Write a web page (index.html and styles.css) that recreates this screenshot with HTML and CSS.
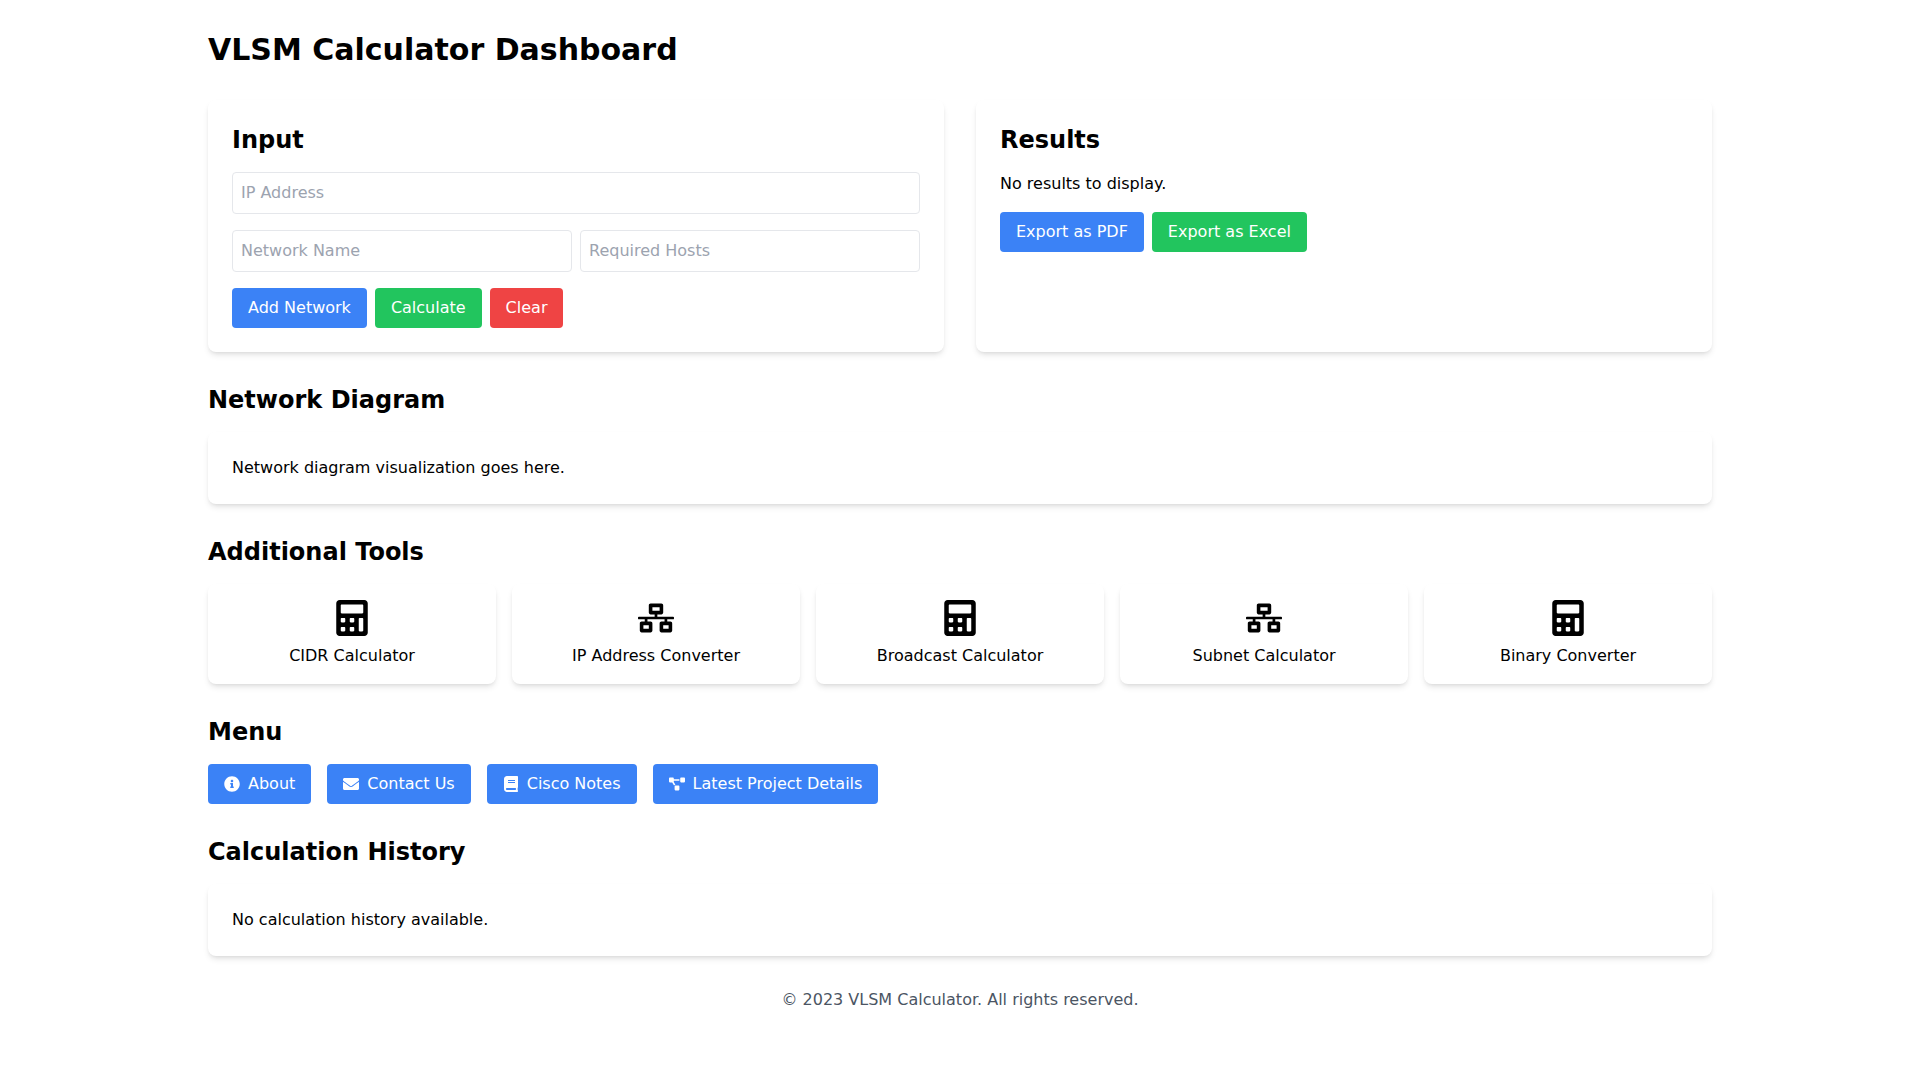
FILE: index.html
```html
<!DOCTYPE html>
<html lang="en">
<head>
  <meta charset="UTF-8">
  <meta name="viewport" content="width=device-width, initial-scale=1.0">
  <title>VLSM Calculator Dashboard</title>
  <link rel="stylesheet" href="styles.css">
</head>
<body>
  <svg class="sprites" xmlns="http://www.w3.org/2000/svg">
    <symbol id="icon-calculator" viewBox="0 0 448 512">
      <path fill="currentColor" d="M400 0H48C22.4 0 0 22.4 0 48v416c0 25.6 22.4 48 48 48h352c25.6 0 48-22.4 48-48V48c0-25.6-22.4-48-48-48zM128 435.2c0 6.4-6.4 12.8-12.8 12.8H76.8c-6.4 0-12.8-6.4-12.8-12.8v-38.4c0-6.4 6.4-12.8 12.8-12.8h38.4c6.4 0 12.8 6.4 12.8 12.8v38.4zm0-128c0 6.4-6.4 12.8-12.8 12.8H76.8c-6.4 0-12.8-6.4-12.8-12.8v-38.4c0-6.4 6.4-12.8 12.8-12.8h38.4c6.4 0 12.8 6.4 12.8 12.8v38.4zm128 128c0 6.4-6.4 12.8-12.8 12.8h-38.4c-6.4 0-12.8-6.4-12.8-12.8v-38.4c0-6.4 6.4-12.8 12.8-12.8h38.4c6.4 0 12.8 6.4 12.8 12.8v38.4zm0-128c0 6.4-6.4 12.8-12.8 12.8h-38.4c-6.4 0-12.8-6.4-12.8-12.8v-38.4c0-6.4 6.4-12.8 12.8-12.8h38.4c6.4 0 12.8 6.4 12.8 12.8v38.4zm128 128c0 6.4-6.4 12.8-12.8 12.8h-38.4c-6.4 0-12.8-6.4-12.8-12.8V268.8c0-6.4 6.4-12.8 12.8-12.8h38.4c6.4 0 12.8 6.4 12.8 12.8v166.4zm0-256c0 6.4-6.4 12.8-12.8 12.8H76.8c-6.4 0-12.8-6.4-12.8-12.8V76.8C64 70.4 70.4 64 76.8 64h294.4c6.4 0 12.8 6.4 12.8 12.8v102.4z"/>
    </symbol>
    <symbol id="icon-network" viewBox="0 0 640 512">
      <path fill="currentColor" d="M640 264v-16c0-8.84-7.16-16-16-16H344v-40h72c17.67 0 32-14.33 32-32V32c0-17.67-14.33-32-32-32H224c-17.67 0-32 14.33-32 32v128c0 17.67 14.33 32 32 32h72v40H16c-8.84 0-16 7.16-16 16v16c0 8.84 7.16 16 16 16h104v40H64c-17.67 0-32 14.33-32 32v128c0 17.67 14.33 32 32 32h160c17.67 0 32-14.33 32-32V352c0-17.67-14.33-32-32-32h-56v-40h304v40h-56c-17.67 0-32 14.33-32 32v128c0 17.67 14.33 32 32 32h160c17.67 0 32-14.33 32-32V352c0-17.67-14.33-32-32-32h-56v-40h104c8.84 0 16-7.16 16-16zM256 128V64h128v64H256zm-64 320H96v-64h96v64zm352 0h-96v-64h96v64z"/>
    </symbol>
  </svg>

  <div class="container">
    <h1>VLSM Calculator Dashboard</h1>

    <div class="top-grid">
      <div class="card">
        <h2>Input</h2>
        <input class="field" type="text" placeholder="IP Address">
        <div class="field-row">
          <input class="field" type="text" placeholder="Network Name">
          <input class="field" type="text" placeholder="Required Hosts">
        </div>
        <div class="btn-row">
          <button class="btn btn-blue">Add Network</button>
          <button class="btn btn-green">Calculate</button>
          <button class="btn btn-red">Clear</button>
        </div>
      </div>

      <div class="card">
        <h2>Results</h2>
        <p class="results-text">No results to display.</p>
        <div class="btn-row">
          <button class="btn btn-blue">Export as PDF</button>
          <button class="btn btn-green">Export as Excel</button>
        </div>
      </div>
    </div>

    <section class="section">
      <h2>Network Diagram</h2>
      <div class="card">
        <p>Network diagram visualization goes here.</p>
      </div>
    </section>

    <section class="section">
      <h2>Additional Tools</h2>
      <div class="tools-grid">
        <div class="tool-card">
          <svg class="tool-icon"><use href="#icon-calculator"></use></svg>
          <p>CIDR Calculator</p>
        </div>
        <div class="tool-card">
          <svg class="tool-icon"><use href="#icon-network"></use></svg>
          <p>IP Address Converter</p>
        </div>
        <div class="tool-card">
          <svg class="tool-icon"><use href="#icon-calculator"></use></svg>
          <p>Broadcast Calculator</p>
        </div>
        <div class="tool-card">
          <svg class="tool-icon"><use href="#icon-network"></use></svg>
          <p>Subnet Calculator</p>
        </div>
        <div class="tool-card">
          <svg class="tool-icon"><use href="#icon-calculator"></use></svg>
          <p>Binary Converter</p>
        </div>
      </div>
    </section>

    <section class="section">
      <h2>Menu</h2>
      <div class="menu-row">
        <a class="btn btn-blue menu-btn" href="#">
          <svg class="menu-icon" viewBox="0 0 512 512"><path fill="currentColor" d="M256 8C119.043 8 8 119.083 8 256c0 136.997 111.043 248 248 248s248-111.003 248-248C504 119.083 392.957 8 256 8zm0 110c23.196 0 42 18.804 42 42s-18.804 42-42 42-42-18.804-42-42 18.804-42 42-42zm56 254c0 6.627-5.373 12-12 12h-88c-6.627 0-12-5.373-12-12v-24c0-6.627 5.373-12 12-12h12v-64h-12c-6.627 0-12-5.373-12-12v-24c0-6.627 5.373-12 12-12h64c6.627 0 12 5.373 12 12v100h12c6.627 0 12 5.373 12 12v24z"/></svg>
          About
        </a>
        <a class="btn btn-blue menu-btn" href="#">
          <svg class="menu-icon" viewBox="0 0 512 512"><path fill="currentColor" d="M502.3 190.8c3.9-3.1 9.7-.2 9.7 4.7V400c0 26.5-21.5 48-48 48H48c-26.5 0-48-21.5-48-48V195.6c0-5 5.7-7.8 9.7-4.7 22.4 17.4 52.1 39.5 154.1 113.6 21.1 15.4 56.7 47.8 92.2 47.6 35.7.3 72-32.8 92.3-47.6 102-74.1 131.6-96.3 154-113.7zM256 320c23.2.4 56.6-29.2 73.4-41.4 132.7-96.3 142.8-104.7 173.4-128.7 5.8-4.5 9.2-11.5 9.2-18.9v-19c0-26.5-21.5-48-48-48H48C21.5 64 0 85.5 0 112v19c0 7.4 3.4 14.3 9.2 18.9 30.6 23.9 40.7 32.4 173.4 128.7 16.8 12.2 50.2 41.8 73.4 41.4z"/></svg>
          Contact Us
        </a>
        <a class="btn btn-blue menu-btn" href="#">
          <svg class="menu-icon" viewBox="0 0 448 512"><path fill="currentColor" d="M448 360V24c0-13.3-10.7-24-24-24H96C43 0 0 43 0 96v320c0 53 43 96 96 96h328c13.3 0 24-10.7 24-24v-16c0-7.5-3.5-14.3-8.9-18.7-4.2-15.4-4.2-59.3 0-74.7 5.4-4.3 8.9-11.1 8.9-18.6zM128 134c0-3.3 2.7-6 6-6h212c3.3 0 6 2.7 6 6v20c0 3.3-2.7 6-6 6H134c-3.3 0-6-2.7-6-6v-20zm0 64c0-3.3 2.7-6 6-6h212c3.3 0 6 2.7 6 6v20c0 3.3-2.7 6-6 6H134c-3.3 0-6-2.7-6-6v-20zm253.4 250H96c-17.7 0-32-14.3-32-32 0-17.6 14.4-32 32-32h285.4c-1.9 17.1-1.9 46.9 0 64z"/></svg>
          Cisco Notes
        </a>
        <a class="btn btn-blue menu-btn" href="#">
          <svg class="menu-icon" viewBox="0 0 640 512"><path fill="currentColor" d="M384 320H256c-17.67 0-32 14.33-32 32v128c0 17.67 14.33 32 32 32h128c17.67 0 32-14.33 32-32V352c0-17.67-14.33-32-32-32zM192 32c0-17.67-14.33-32-32-32H32C14.33 0 0 14.33 0 32v128c0 17.67 14.33 32 32 32h95.72l73.16 128.04C211.98 300.98 232.4 288 256 288h.28L192 175.51V128h224V64H192V32zM608 0H480c-17.67 0-32 14.33-32 32v128c0 17.67 14.33 32 32 32h128c17.67 0 32-14.33 32-32V32c0-17.67-14.33-32-32-32z"/></svg>
          Latest Project Details
        </a>
      </div>
    </section>

    <section class="section">
      <h2>Calculation History</h2>
      <div class="card">
        <p>No calculation history available.</p>
      </div>
    </section>

    <footer class="footer">© 2023 VLSM Calculator. All rights reserved.</footer>
  </div>
</body>
</html>
```

FILE: styles.css
```css
* {
  box-sizing: border-box;
}

body {
  margin: 0;
  background-color: #ffffff;
  color: #000000;
  font-family: "DejaVu Sans", sans-serif;
  font-size: 16px;
  line-height: 24px;
}

h1, h2, p {
  margin: 0;
}

h1 {
  font-size: 30px;
  line-height: 36px;
  font-weight: 700;
  margin-bottom: 32px;
}

h2 {
  font-size: 24px;
  line-height: 32px;
  font-weight: 700;
  margin-bottom: 16px;
}

.sprites {
  display: none;
}

.container {
  max-width: 1536px;
  margin: 0 auto;
  padding: 32px 16px;
}

.top-grid {
  display: grid;
  grid-template-columns: 1fr 1fr;
  gap: 32px;
}

.card {
  background-color: #ffffff;
  border-radius: 8px;
  padding: 24px;
  box-shadow: 0 4px 6px -1px rgba(0, 0, 0, 0.1), 0 2px 4px -2px rgba(0, 0, 0, 0.1);
}

.field {
  display: block;
  width: 100%;
  height: 42px;
  padding: 7px 8px 9px;
  margin-bottom: 16px;
  border: 1px solid #e5e7eb;
  border-radius: 4px;
  background-color: #ffffff;
  font-family: inherit;
  font-size: 16px;
  line-height: 24px;
}

.field::placeholder {
  color: #9ca3af;
  opacity: 1;
}

.field-row {
  display: flex;
  gap: 8px;
}

.btn-row {
  display: flex;
  gap: 8px;
}

.btn {
  display: inline-block;
  padding: 8px 16px;
  border: none;
  border-radius: 4px;
  color: #ffffff;
  font-family: inherit;
  font-size: 16px;
  line-height: 24px;
  text-decoration: none;
  cursor: pointer;
}

.btn-blue {
  background-color: #3b82f6;
}

.btn-green {
  background-color: #22c55e;
}

.btn-red {
  background-color: #ef4444;
}

.results-text {
  margin-bottom: 16px;
}

.section {
  margin-top: 32px;
}

.tools-grid {
  display: grid;
  grid-template-columns: repeat(5, 1fr);
  gap: 16px;
}

.tool-card {
  display: flex;
  flex-direction: column;
  align-items: center;
  padding: 16px;
  background-color: #ffffff;
  border-radius: 8px;
  box-shadow: 0 4px 6px -1px rgba(0, 0, 0, 0.1), 0 2px 4px -2px rgba(0, 0, 0, 0.1);
}

.tool-icon {
  display: block;
  width: 36px;
  height: 36px;
  margin-bottom: 8px;
  color: #000000;
}

.menu-row {
  display: flex;
  gap: 16px;
}

.menu-btn {
  display: inline-flex;
  align-items: center;
}

.menu-icon {
  width: 16px;
  height: 16px;
  margin-right: 8px;
  flex-shrink: 0;
}

.footer {
  margin-top: 32px;
  text-align: center;
  color: #4b5563;
}
```
